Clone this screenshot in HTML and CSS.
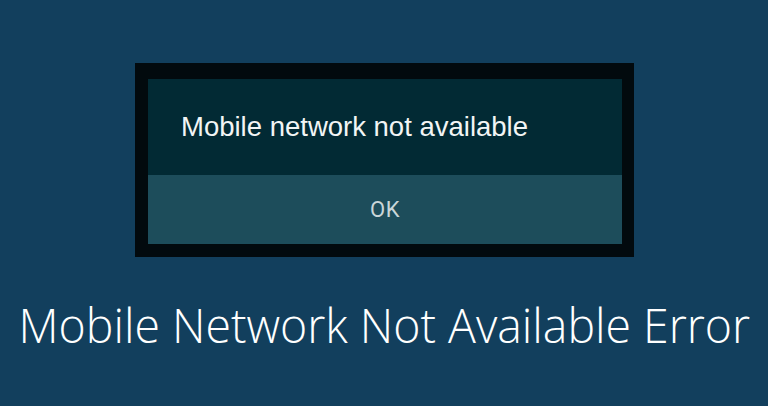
FILE: index.html
```html
<!DOCTYPE html>
<html>
<head>
<meta charset="utf-8">
<link rel="stylesheet" href="styles.css">
</head>
<body>
<div class="page">
  <div class="frame">
    <div class="dialog">
      <div class="message">Mobile network not available</div>
      <div class="button">OK</div>
    </div>
  </div>
  <h1 class="title"><span class="title-text">Mobile Network Not Available Error</span></h1>
</div>
</body>
</html>
```
FILE: styles.css
```css
html, body {
  margin: 0;
  padding: 0;
  background: #123f5d;
}
.page {
  width: 768px;
  height: 406px;
  display: flex;
  flex-direction: column;
  align-items: center;
  padding-top: 63px;
  box-sizing: border-box;
  overflow: hidden;
}
.frame {
  width: 499px;
  box-sizing: border-box;
  background: #020a0e;
  padding: 16px 12px 13px 13px;
  margin-left: 1px;
}
.dialog {
  display: flex;
  flex-direction: column;
}
.message {
  height: 96px;
  background: #022a34;
  color: #f2f5f5;
  font-family: "Liberation Sans", Arial, sans-serif;
  font-size: 27.5px;
  padding-left: 33px;
  box-sizing: border-box;
  display: flex;
  align-items: center;
}
.button {
  height: 69px;
  background: #1d4d5b;
  color: #c9d6d9;
  font-family: Roboto, "Liberation Sans", sans-serif;
  font-size: 22px;
  letter-spacing: 0.5px;
  display: flex;
  align-items: center;
  justify-content: center;
}
.title {
  margin: 44px 0 0 0;
  width: 768px;
  display: flex;
  justify-content: center;
  font-family: "Open Sans", sans-serif;
  font-weight: 300;
  font-size: 48px;
  color: #ffffff;
  line-height: 1;
  white-space: nowrap;
}
.title-text {
  display: inline-block;
  transform: scaleX(0.967);
  transform-origin: center;
}
```
